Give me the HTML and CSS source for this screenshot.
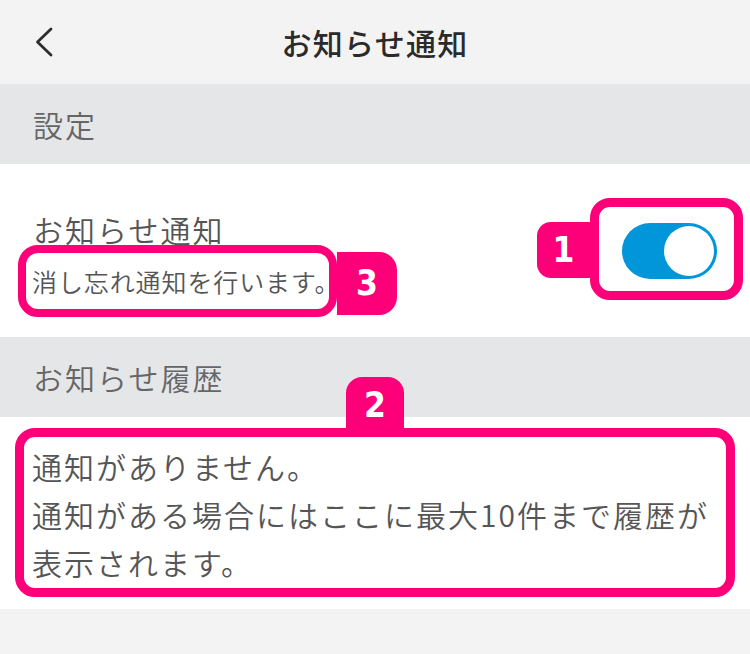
FILE: index.html
```html
<!DOCTYPE html>
<html lang="ja">
<head>
<meta charset="utf-8">
<title>お知らせ通知</title>
<link rel="stylesheet" href="styles.css">
</head>
<body>
<header class="topbar">
  <button class="back" aria-label="戻る">
    <svg width="20" height="30" viewBox="0 0 20 30"><path d="M17 2 L3.5 15 L17 28" fill="none" stroke="#2e2e2e" stroke-width="2.8" stroke-linecap="round" stroke-linejoin="round"/></svg>
  </button>
  <h1 class="title">お知らせ通知</h1>
  <span class="spacer"></span>
</header>

<h2 class="section-head">設定</h2>
<div class="setting-row">
  <div class="setting-text">
    <p class="setting-label">お知らせ通知</p>
    <div class="note">
      <div class="note-box sub-box"><p class="setting-desc">消し忘れ通知を行います。</p></div>
      <span class="badge badge-3">3</span>
    </div>
  </div>
  <div class="note note-toggle">
    <span class="badge badge-1">1</span>
    <div class="note-box toggle-box">
      <span class="toggle"><span class="knob"></span></span>
    </div>
  </div>
</div>

<h2 class="section-head">お知らせ履歴</h2>
<div class="history">
  <div class="note-col">
    <span class="badge badge-2">2</span>
    <div class="note-box history-box">
      <p class="history-text">通知がありません。<br>通知がある場合にはここに最大10件まで履歴が表示されます。</p>
    </div>
  </div>
</div>
</body>
</html>
```

FILE: styles.css
```css
* { box-sizing: border-box; }
html, body { margin: 0; padding: 0; }
body {
  width: 750px;
  height: 654px;
  overflow: hidden;
  background: #f3f3f3;
  font-family: "Noto Sans CJK JP", "Noto Sans", sans-serif;
  color: #555;
}
p, h1, h2 { margin: 0; }

.topbar {
  height: 84px;
  display: grid;
  grid-template-columns: 1fr auto 1fr;
  align-items: center;
  padding: 0 34px;
  background: #f3f3f3;
}
.back {
  justify-self: start;
  display: flex;
  padding: 0;
  margin: 0;
  border: 0;
  background: none;
}
.title {
  font-size: 30px;
  font-weight: 500;
  letter-spacing: 1.3px;
  color: #2a2a2a;
  line-height: 40px;
}

.section-head {
  height: 80px;
  display: flex;
  align-items: center;
  padding-left: 33px;
  background: #e5e6e8;
  font-size: 30px;
  font-weight: 350;
  letter-spacing: 2px;
  color: #666;
}

.setting-row {
  height: 173px;
  background: #fff;
  display: flex;
  justify-content: space-between;
  align-items: flex-start;
  padding: 0 7px 0 18px;
}
.setting-text { margin-top: 48px; }
.setting-label {
  margin-left: 15px;
  font-size: 30px;
  font-weight: 350;
  line-height: 34px;
  letter-spacing: 2px;
  color: #555;
}

.note { display: flex; align-items: flex-start; }
.note-box {
  border: 9px solid #fd0079;
  border-radius: 20px;
  background: #fff;
}
.badge {
  display: flex;
  align-items: center;
  justify-content: center;
  background: #fd0079;
  color: #fff;
  font-family: "DejaVu Sans Condensed", "Liberation Sans Narrow", Roboto, sans-serif;
  font-weight: 700;
  font-size: 35px;
  line-height: 1;
}

.sub-box {
  margin-top: -1px;
  width: 319px;
  height: 72px;
  border-width: 8px;
  display: flex;
  align-items: center;
  padding-left: 6px;
}
.setting-desc {
  white-space: nowrap;
  font-size: 25px;
  font-weight: 350;
  letter-spacing: 0.9px;
  line-height: 30px;
  color: #555;
}
.badge-3 {
  width: 60px;
  height: 63px;
  margin-top: 6px;
  border-radius: 0 18px 18px 0;
}

.note-toggle { margin-top: 34px; }
.badge-1 {
  width: 53px;
  height: 56px;
  margin-top: 24px;
  border-radius: 14px 0 0 14px;
}
.toggle-box {
  width: 153px;
  height: 102px;
  display: flex;
  padding: 16px 17px 12px 23px;
}
.toggle {
  width: 95px;
  height: 56px;
  border-radius: 28px;
  background: #0096d9;
  display: flex;
  align-items: center;
  justify-content: flex-end;
  padding-right: 3px;
}
.knob {
  width: 50px;
  height: 50px;
  border-radius: 50%;
  background: #fff;
}

.history {
  height: 192px;
  background: #fff;
  display: flex;
  flex-direction: column;
}
.note-col {
  display: flex;
  flex-direction: column;
  align-items: center;
  margin-top: -40px;
}
.badge-2 {
  width: 58px;
  height: 51px;
  padding-top: 6px;
  border-radius: 16px 16px 0 0;
}
.history-box {
  width: 720px;
  height: 169px;
  padding: 5px 6px 2px 8px;
}
.history-text {
  font-size: 30px;
  font-weight: 350;
  line-height: 48px;
  letter-spacing: 2px;
  color: #555;
}
```
